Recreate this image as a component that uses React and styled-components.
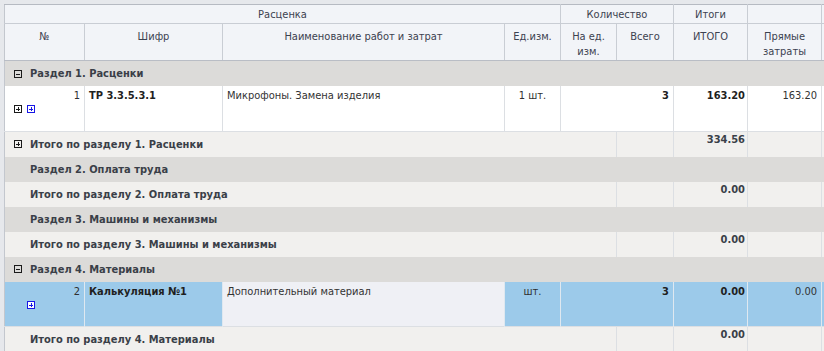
import React from 'react';
import styled, { createGlobalStyle } from 'styled-components';

const GlobalStyle = createGlobalStyle`
  html, body {
    margin: 0;
    padding: 0;
    background: #ffffff;
  }
  body {
    font-family: "DejaVu Sans Condensed", "DejaVu Sans", sans-serif;
    font-stretch: condensed;
    font-size: 11px;
    color: #2f2f2f;
  }
`;

const Frame = styled.div`
  width: 824px;
  height: 351px;
  overflow: hidden;
  box-sizing: border-box;
  padding: 4px 0 0 4px;
  background: #e6e8ec;
`;

const Grid = styled.table`
  border-collapse: collapse;
  table-layout: fixed;
  width: 830px;
  border-top: 1px solid #b6bac2;
  border-left: 1px solid #c3c7ce;
`;

const HeadCell = styled.th`
  background: #f2f4f8;
  border-right: 1px solid #c9cdd4;
  border-bottom: 1px solid #c9cdd4;
  color: #3c4250;
  font-weight: normal;
  text-align: center;
  vertical-align: top;
  padding: ${(p) => (p.$top ? '3px 2px 2px' : '5px 2px 0')};
  line-height: ${(p) => (p.$top ? '13px' : '15px')};
  height: ${(p) => (p.$top ? '13px' : '31px')};
  white-space: nowrap;
`;

const LastHeadRow = styled.tr`
  th {
    border-bottom-color: #b9bdc5;
  }
`;

const GroupRow = styled.tr`
  background: #dcdbd9;
  td {
    height: 25px;
    padding: 0;
    font-weight: bold;
    color: #3a3f48;
    vertical-align: middle;
    white-space: nowrap;
  }
`;

const TotalRow = styled.tr`
  background: #f1f0ee;
  td {
    height: 25px;
    padding: 0;
    vertical-align: top;
    border-right: 1px solid #dcdfe3;
  }
`;

const DataRow = styled.tr`
  background: ${(p) => (p.$selected ? '#9ccaea' : '#ffffff')};
  border-bottom: 1px solid #dcdfe3;
  td {
    height: 45px;
    padding: 3px 4px 0;
    box-sizing: border-box;
    vertical-align: top;
    border-right: 1px solid ${(p) => (p.$selected ? '#dfe8f0' : '#dcdfe3')};
    line-height: 13px;
    white-space: nowrap;
  }
`;

const GroupLabel = styled.div`
  display: flex;
  align-items: center;
  gap: 8px;
  padding-left: 9px;
  line-height: 13px;
`;

const IconSlot = styled.span`
  display: inline-flex;
  width: 8px;
  height: 8px;
  visibility: ${(p) => (p.$hidden ? 'hidden' : 'visible')};
`;

const TotalLabel = styled.div`
  display: flex;
  align-items: center;
  gap: 8px;
  height: 25px;
  padding-left: 9px;
  font-weight: bold;
  color: #3a3f48;
  white-space: nowrap;
`;

const TotalValue = styled.div`
  text-align: right;
  font-weight: bold;
  color: #3a3f48;
  padding: 1px 2px 0 0;
  line-height: 13px;
`;

const NumCell = styled.td`
  text-align: right;
`;

const RowIcons = styled.div`
  display: flex;
  gap: 5px;
  padding: 3px 0 0 5px;
`;

const Code = styled.td`
  font-weight: bold;
  color: #1f1f1f;
`;

const NameCell = styled.td`
  background: ${(p) => (p.$selected ? '#eff0f5' : 'transparent')};
  color: #333;
`;

const Center = styled.td`
  text-align: center;
`;

const Right = styled.td`
  text-align: right;
  font-weight: ${(p) => (p.$bold ? 'bold' : 'normal')};
  color: ${(p) => (p.$bold ? '#1f1f1f' : '#333')};
  && {
    padding-right: ${(p) => (p.$tight ? '2px' : '4px')};
  }
`;

const Plain = styled.td``;

const BoxIcon = ({ minus, blue, hidden }) => {
  const c = blue ? '#1818e6' : '#1a1a1a';
  return (
    <IconSlot $hidden={hidden}>
      <svg width="8" height="8" viewBox="0 0 8 8" shapeRendering="crispEdges">
        <rect x="0.5" y="0.5" width="7" height="7" fill={blue ? '#ffffff' : 'none'} stroke={c} />
        <line x1="2" y1="4" x2="6" y2="4" stroke={c} />
        {!minus && <line x1="4" y1="2" x2="4" y2="6" stroke={c} />}
      </svg>
    </IconSlot>
  );
};

const cols = [80, 138, 282, 56, 56, 57, 74, 74, 13];

const Group = ({ title, open }) => (
  <GroupRow>
    <td colSpan={9}>
      <GroupLabel>
        <BoxIcon minus hidden={!open} />
        <span>{title}</span>
      </GroupLabel>
    </td>
  </GroupRow>
);

const Total = ({ title, value, icon }) => (
  <TotalRow>
    <td colSpan={5}>
      <TotalLabel>
        <BoxIcon hidden={!icon} />
        <span>{title}</span>
      </TotalLabel>
    </td>
    <td />
    <td>
      <TotalValue>{value}</TotalValue>
    </td>
    <td />
    <td />
  </TotalRow>
);

const Item = ({ n, code, name, unit, qty, total, direct, selected, twoIcons }) => (
  <DataRow $selected={selected}>
    <NumCell>
      <div>{n}</div>
      <RowIcons>
        <BoxIcon hidden={!twoIcons} />
        <BoxIcon blue />
      </RowIcons>
    </NumCell>
    <Code>{code}</Code>
    <NameCell $selected={selected}>{name}</NameCell>
    <Center>{unit}</Center>
    <Right colSpan={2} $bold>{qty}</Right>
    <Right $bold $tight>{total}</Right>
    <Right>{direct}</Right>
    <Plain />
  </DataRow>
);

export default function App() {
  return (
    <>
      <GlobalStyle />
      <Frame>
        <Grid>
          <colgroup>
            {cols.map((w, i) => (
              <col key={i} style={{ width: w }} />
            ))}
          </colgroup>
          <thead>
            <tr>
              <HeadCell $top colSpan={4}>Расценка</HeadCell>
              <HeadCell $top colSpan={2}>Количество</HeadCell>
              <HeadCell $top>Итоги</HeadCell>
              <HeadCell $top />
              <HeadCell $top />
            </tr>
            <LastHeadRow>
              <HeadCell>№</HeadCell>
              <HeadCell>Шифр</HeadCell>
              <HeadCell>Наименование работ и затрат</HeadCell>
              <HeadCell>Ед.изм.</HeadCell>
              <HeadCell>На ед.<br />изм.</HeadCell>
              <HeadCell>Всего</HeadCell>
              <HeadCell>ИТОГО</HeadCell>
              <HeadCell>Прямые<br />затраты</HeadCell>
              <HeadCell />
            </LastHeadRow>
          </thead>
          <tbody>
            <Group title="Раздел 1. Расценки" open />
            <Item
              n="1"
              code="ТР 3.3.5.3.1"
              name="Микрофоны. Замена изделия"
              unit="1 шт."
              qty="3"
              total="163.20"
              direct="163.20"
              twoIcons
            />
            <Total title="Итого по разделу 1. Расценки" value="334.56" icon />
            <Group title="Раздел 2. Оплата труда" />
            <Total title="Итого по разделу 2. Оплата труда" value="0.00" />
            <Group title="Раздел 3. Машины и механизмы" />
            <Total title="Итого по разделу 3. Машины и механизмы" value="0.00" />
            <Group title="Раздел 4. Материалы" open />
            <Item
              n="2"
              code="Калькуляция №1"
              name="Дополнительный материал"
              unit="шт."
              qty="3"
              total="0.00"
              direct="0.00"
              selected
            />
            <Total title="Итого по разделу 4. Материалы" value="0.00" />
          </tbody>
        </Grid>
      </Frame>
    </>
  );
}
